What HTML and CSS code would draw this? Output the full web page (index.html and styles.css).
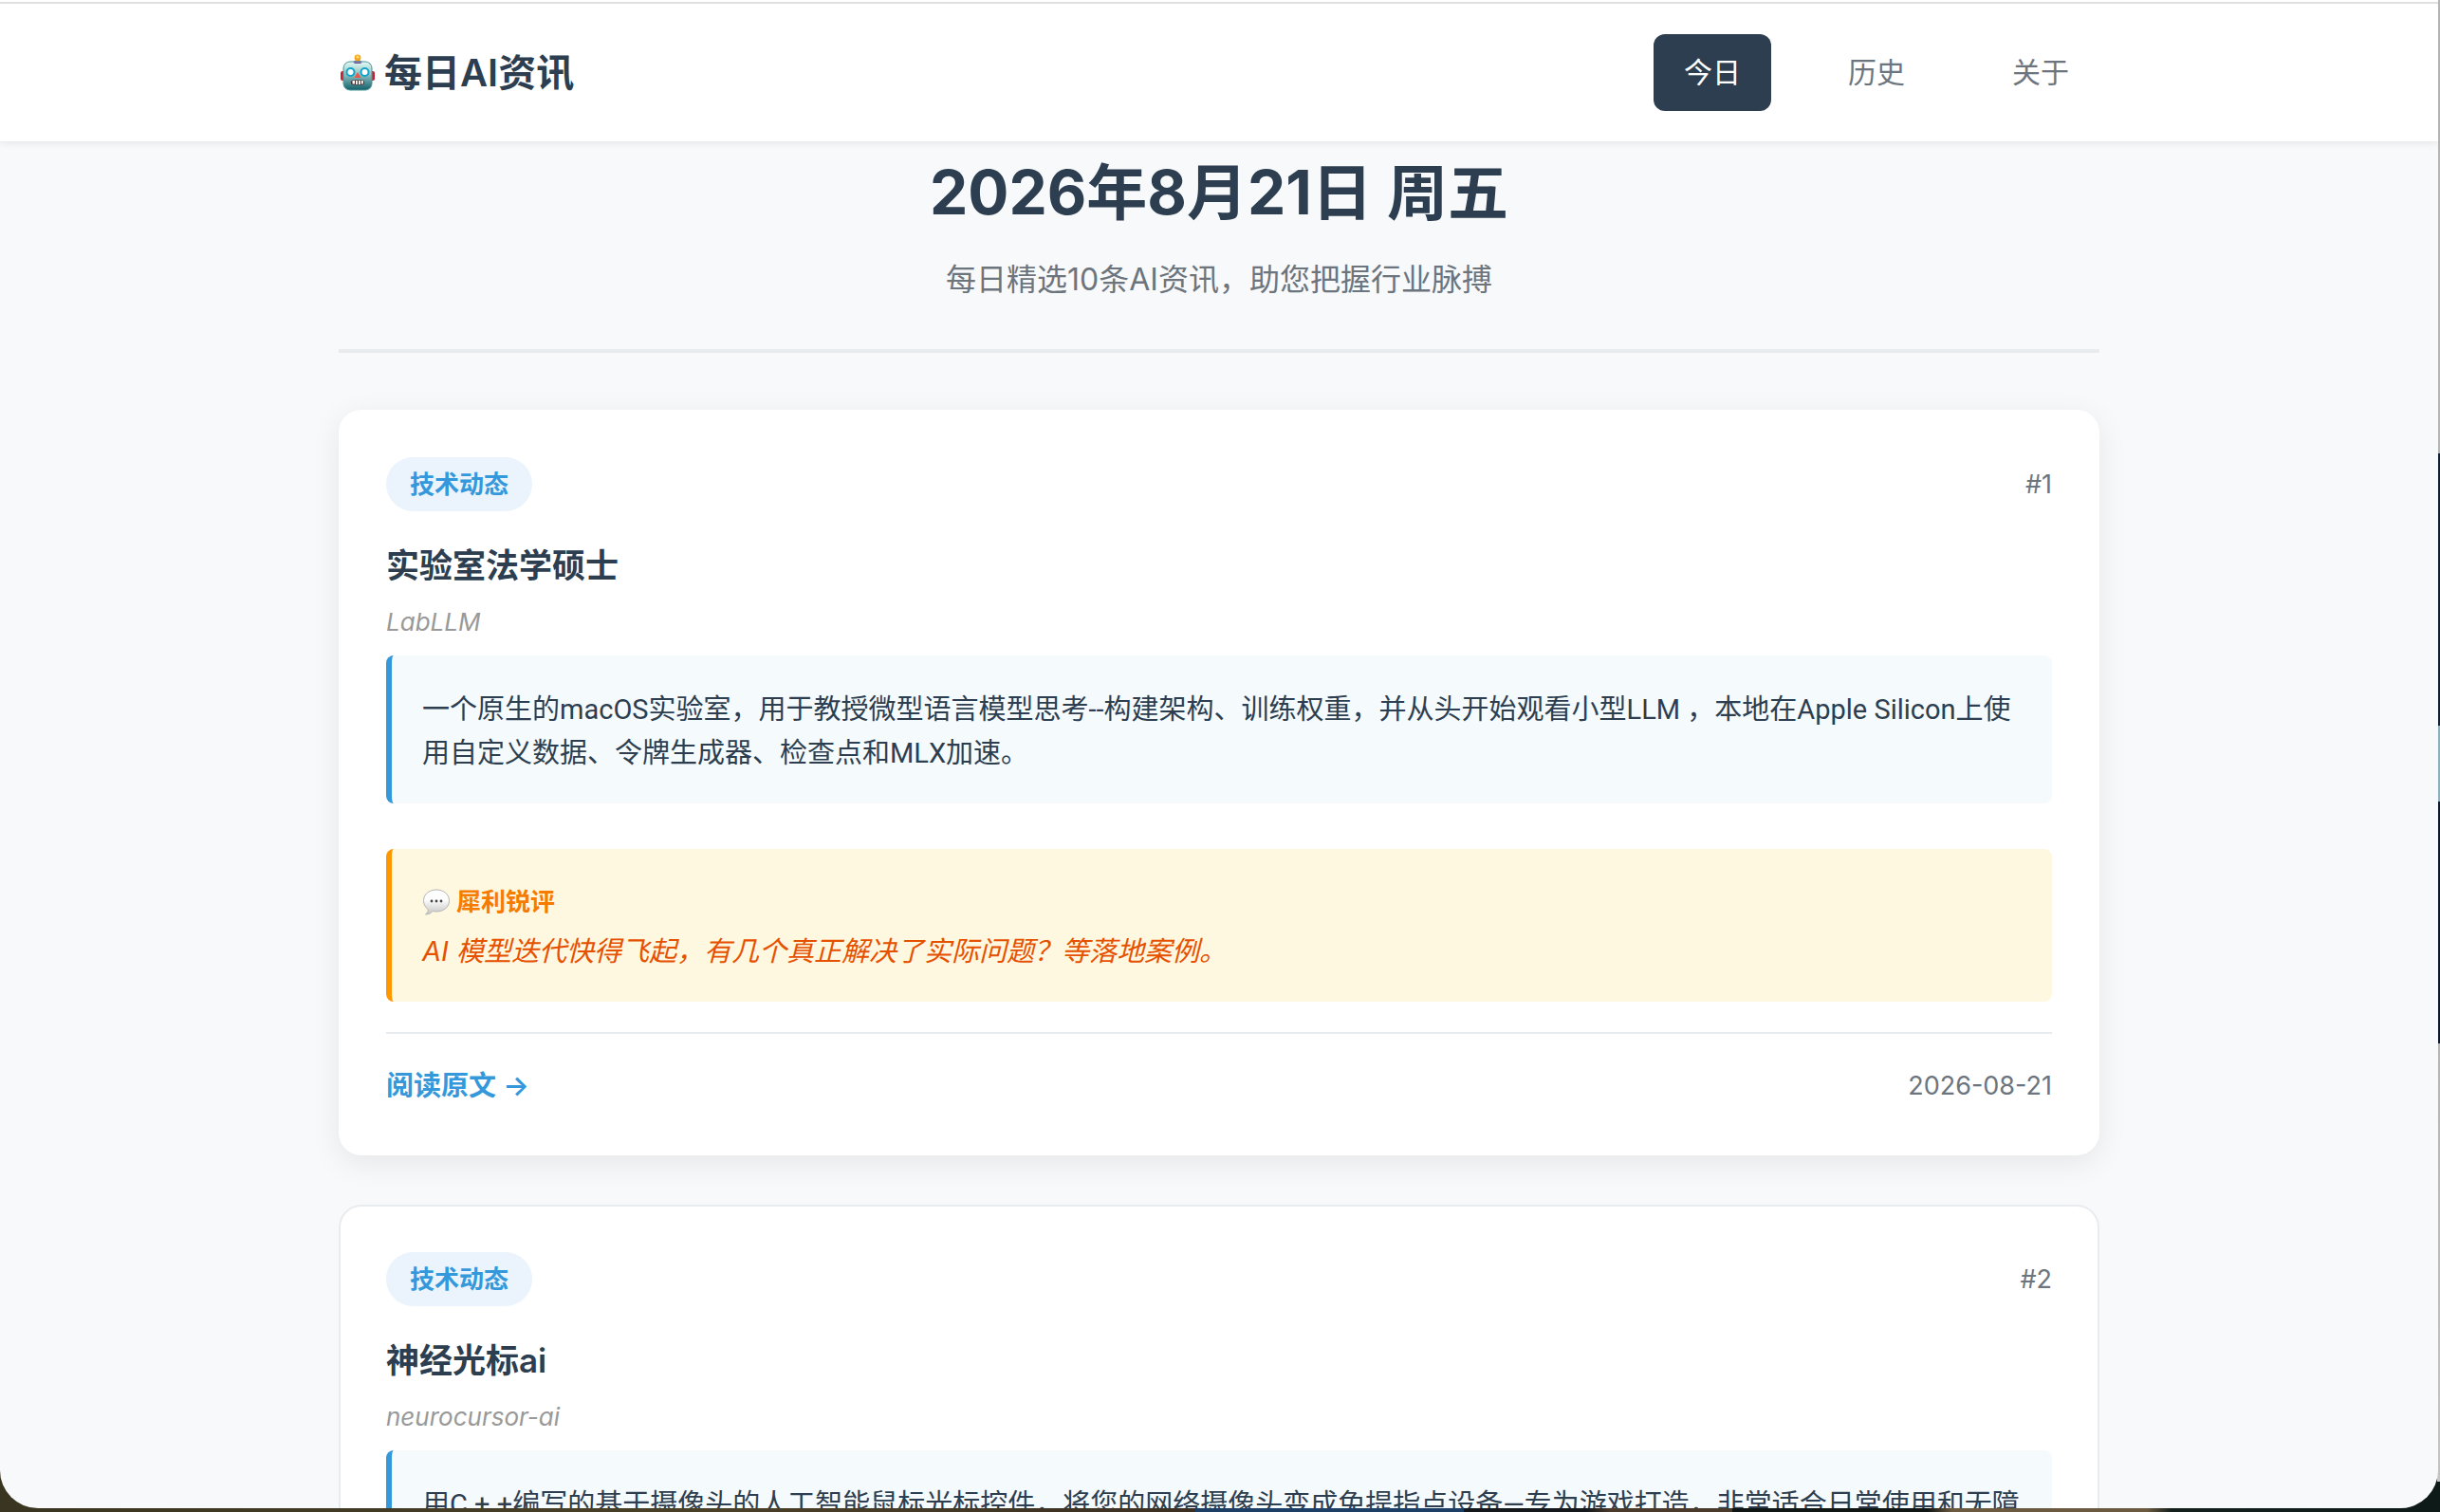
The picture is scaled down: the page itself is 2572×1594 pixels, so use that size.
FILE: index.html
```html
<!DOCTYPE html>
<html lang="zh-CN">
<head>
    <meta charset="UTF-8">
    <meta name="viewport" content="width=device-width, initial-scale=1.0">
    <title>每日AI资讯</title>
    <link rel="stylesheet" href="styles.css">
</head>
<body>

<div class="window">
    <header class="header">
        <div class="container header-inner">
            <a class="logo" href="#">
                <svg class="logo-icon" viewBox="0 0 40 40" aria-hidden="true">
                    <defs>
                        <linearGradient id="face" x1="0" y1="0" x2="0" y2="1">
                            <stop offset="0" stop-color="#e3fbf6"/>
                            <stop offset="0.45" stop-color="#8fc0c1"/>
                            <stop offset="1" stop-color="#12606a"/>
                        </linearGradient>
                    </defs>
                    <rect x="2" y="18" width="5" height="10" rx="2" fill="#c8202f"/>
                    <rect x="33" y="18" width="5" height="10" rx="2" fill="#c8202f"/>
                    <path d="M15 9c0-3 10-3 10 0z" fill="#6a4a9c"/>
                    <circle cx="20" cy="4" r="3.4" fill="#f9a61c"/>
                    <circle cx="20" cy="3" r="1.6" fill="#ffe06a"/>
                    <rect x="5" y="8" width="30" height="30" rx="7" fill="url(#face)" stroke="#4f9499"/>
                    <path d="M15 8.500h10l-2 1.500h-6z" fill="#6a4a9c"/>
                    <circle cx="12.500" cy="19" r="4" fill="#fff" stroke="#10a5c8" stroke-width="2"/>
                    <circle cx="27.500" cy="19" r="4" fill="#fff" stroke="#10a5c8" stroke-width="2"/>
                    <path d="M20 19l3.500 6h-7z" fill="#e8584c"/>
                    <rect x="13" y="27.500" width="14" height="5" rx="2" fill="#4a2a2a"/>
                    <path d="M14.500 28h2.500v3.500h-2.500zM18 28h1.800v4H18zM21 28h1.800v4H21zM23.800 28h2v3.500h-2z" fill="#fff"/>
                </svg>
                <span>每日AI资讯</span>
            </a>
            <nav class="nav">
                <a class="active" href="#">今日</a>
                <a href="#">历史</a>
                <a href="#">关于</a>
            </nav>
        </div>
    </header>

    <main class="container">
        <div class="page-title">
            <h1>2026年8月21日 周五</h1>
            <p>每日精选10条AI资讯，助您把握行业脉搏</p>
        </div>

        <article class="card card-raised">
            <div class="card-top">
                <span class="tag">技术动态</span>
                <span class="meta">#1</span>
            </div>
            <h2>实验室法学硕士</h2>
            <p class="original">LabLLM</p>
            <div class="summary">一个原生的macOS实验室，用于教授微型语言模型思考--构建架构、训练权重，并从头开始观看小型LLM ，本地在Apple Silicon上使用自定义数据、令牌生成器、检查点和MLX加速。</div>
            <div class="comment">
                <div class="comment-label">
                    <svg class="bubble" viewBox="0 0 30 30" aria-hidden="true">
                        <defs>
                            <linearGradient id="bubble" x1="0" y1="0" x2="0" y2="1">
                                <stop offset="0.4" stop-color="#fdfdfd"/>
                                <stop offset="1" stop-color="#c4c4c4"/>
                            </linearGradient>
                        </defs>
                        <path d="M15 2C7 2 1.500 7 1.500 13.500c0 4 2 7.200 4.800 9.200 0 2-1 4-2.800 5.300 3.500 0 6.200-1.500 7.500-3.500 1.200.3 2.600.5 4 .5 8 0 13.500-5 13.500-11.500S23 2 15 2z" fill="url(#bubble)" stroke="#b5b5b5"/>
                        <circle cx="10" cy="14" r="1.400" fill="#444"/>
                        <circle cx="15" cy="14" r="1.400" fill="#444"/>
                        <circle cx="20" cy="14" r="1.400" fill="#444"/>
                    </svg>
                    <span>犀利锐评</span>
                </div>
                <p>AI 模型迭代快得飞起，有几个真正解决了实际问题？等落地案例。</p>
            </div>
            <div class="card-bottom">
                <a href="#">阅读原文 →</a>
                <time class="meta" datetime="2026-08-21">2026-08-21</time>
            </div>
        </article>

        <article class="card">
            <div class="card-top">
                <span class="tag">技术动态</span>
                <span class="meta">#2</span>
            </div>
            <h2>神经光标ai</h2>
            <p class="original">neurocursor-ai</p>
            <div class="summary">用C + +编写的基于摄像头的人工智能鼠标光标控件，将您的网络摄像头变成免提指点设备—专为游戏打造，非常适合日常使用和无障碍。</div>
        </article>
    </main>
</div>

</body>
</html>
```

FILE: styles.css
```css
* {
    box-sizing: border-box;
    margin: 0;
    padding: 0;
}

/* desktop behind the window, visible along the right and bottom edges */
body {
    height: 100vh;
    padding: 0 2px 4px 0;
    overflow: hidden;
    font-family: Inter, "Noto Sans CJK SC", sans-serif;
    font-size: 29px;
    line-height: 46px;
    color: #2c3e50;
    background:
        linear-gradient(#b4b4b4 30%, #0f2138 30%, #0f2138 48%, #8fb0c0 48%, #8fb0c0 53%, #0c1a30 53%, #0c1a30 69%, #b4b4b4 69%, #c4c4c4 98%, transparent 98%) right top / 3px 100% no-repeat,
        linear-gradient(90deg, #3a3520, #4a4028 30%, #3a2f22 49%, #1d3f66 49%, #1d3f66 60%, #14181a 60%, #14181a 65%, #4a3a2c 66%, #4a3a2c 71%, #101614 71%, #101614 79%, #6b5a40 80%, #6b5a40 88%, #14201c 89%, #0e1a18);
}

.window {
    height: 100%;
    overflow: hidden;
    padding-top: 2px;
    background-color: #f8f9fb;
    border-radius: 0 0 40px 40px;
}

.container {
    width: 100%;
    max-width: 1920px;
    margin: 0 auto;
    padding: 0 32px;
}

.header {
    position: relative;
    margin-top: -2px;
    padding: 2px 0 0;
    background-color: #fff;
    box-shadow: 0 2px 8px rgba(0, 0, 0, 0.08);
}

.header-inner {
    display: flex;
    justify-content: space-between;
    align-items: center;
    padding-top: 32px;
    padding-bottom: 32px;
}

.header::before {
    content: "";
    display: block;
    height: 2px;
    background-color: #e0e0e0;
}

.logo {
    display: flex;
    align-items: center;
    gap: 8px;
    font-size: 40px;
    font-weight: 600;
    color: #2c3e50;
    text-decoration: none;
}

.logo-icon {
    width: 40px;
    height: 40px;
}

.nav {
    display: flex;
    gap: 49px;
}

.nav a {
    padding: 16px 32px;
    font-size: 30px;
    line-height: 49px;
    color: #6c757d;
    text-decoration: none;
    border-radius: 12px;
}

.nav a.active {
    background-color: #2c3e50;
    color: #fff;
}

.page-title {
    margin-bottom: 60px;
    padding: 6px 0 48px;
    text-align: center;
    border-bottom: 4px solid #e9ecef;
}

.page-title h1 {
    font-size: 64px;
    line-height: 96px;
    font-weight: 700;
}

.page-title p {
    margin-top: 18px;
    font-size: 32px;
    line-height: 51px;
    color: #6c757d;
}

.card {
    margin-bottom: 52px;
    padding: 48px;
    background-color: #fff;
    border: 2px solid #e9ecef;
    border-radius: 24px;
}

.card-raised {
    border-color: #fff;
    box-shadow: 0 8px 32px rgba(0, 0, 0, 0.08);
}

.card-top,
.card-bottom {
    display: flex;
    justify-content: space-between;
    align-items: center;
}

.tag {
    padding: 8px 25px;
    font-size: 26px;
    line-height: 41px;
    font-weight: 600;
    color: #3498db;
    background-color: #ebf3fd;
    border-radius: 30px;
}

.meta {
    font-size: 27px;
    color: #6c757d;
}

.card h2 {
    margin-top: 32px;
    font-size: 35px;
    line-height: 50px;
    font-weight: 600;
}

.original {
    margin-top: 14px;
    font-size: 26px;
    line-height: 42px;
    font-style: italic;
    color: #999;
}

.summary {
    margin-top: 14px;
    padding: 34px 24px 30px 32px;
    font-family: Roboto, "Noto Sans CJK SC", sans-serif;
    background-color: #f5fafd;
    border-left: 6px solid #3498db;
    border-radius: 8px;
}

.comment {
    margin-top: 48px;
    padding: 34px 32px 30px;
    color: #e65100;
    background-color: #fff8e1;
    border-left: 6px solid #ff9800;
    border-radius: 8px;
}

.comment-label {
    display: flex;
    align-items: center;
    gap: 6px;
    margin-bottom: 8px;
    font-size: 26px;
    line-height: 43px;
    font-weight: 600;
    color: #f57c00;
}

.bubble {
    width: 30px;
    height: 30px;
}

.comment p {
    font-style: italic;
}

.card-bottom {
    margin-top: 32px;
    padding-top: 32px;
    border-top: 2px solid #e9ecef;
}

.card-bottom a {
    font-weight: 600;
    color: #3498db;
    text-decoration: none;
}
```
